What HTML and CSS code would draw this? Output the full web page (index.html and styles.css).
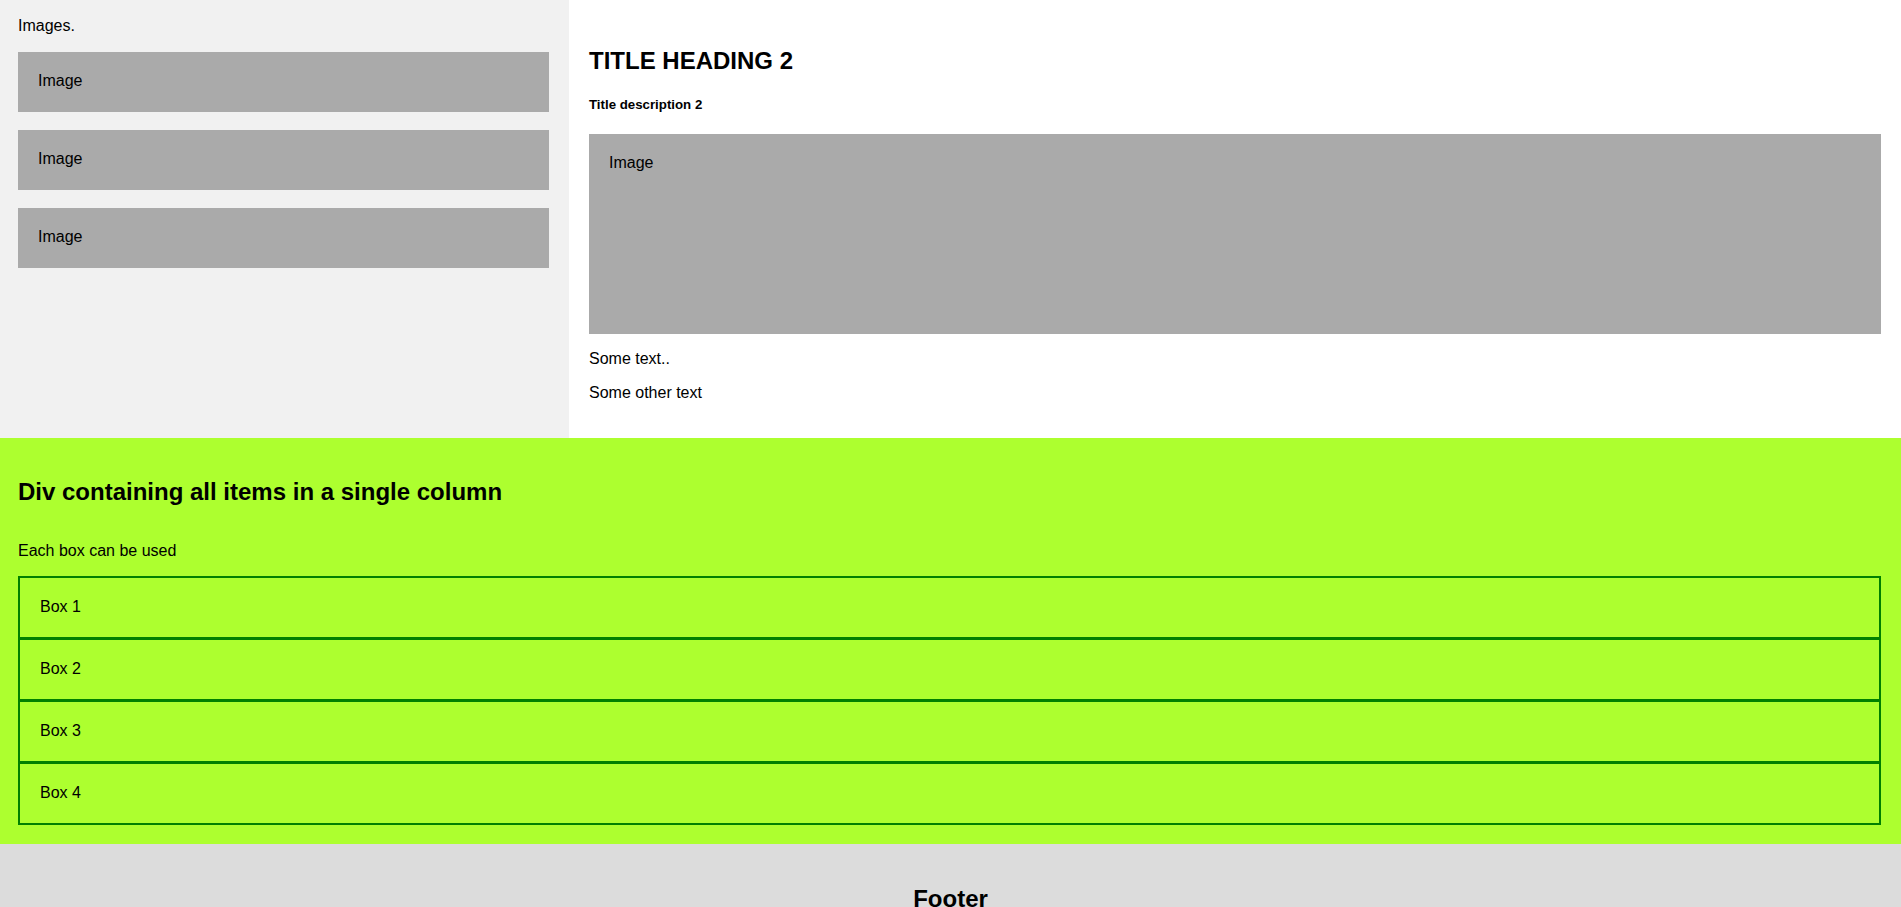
FILE: index.html
```html
<!DOCTYPE html>
<html lang="en">
<head>
    <meta charset="UTF-8">
    <meta name="viewport" content="width=device-width, initial-scale=1.0">
    <title>Layout demo</title>
    <link rel="stylesheet" href="styles.css">
</head>
<body>

    <div class="row">
        <div class="side">
            <p class="side-label">Images.</p>
            <div class="fake-img">Image</div>
            <div class="fake-img">Image</div>
            <div class="fake-img">Image</div>
        </div>
        <div class="main">
            <h2>TITLE HEADING 2</h2>
            <h5>Title description 2</h5>
            <div class="fake-img big">Image</div>
            <p>Some text..</p>
            <p>Some other text</p>
        </div>
    </div>

    <div class="column-area">
        <h2>Div containing all items in a single column</h2>
        <p class="intro">Each box can be used</p>
        <div class="box">Box 1</div>
        <div class="box">Box 2</div>
        <div class="box">Box 3</div>
        <div class="box">Box 4</div>
    </div>

    <div class="footer">
        <h2>Footer</h2>
    </div>

</body>
</html>
```

FILE: styles.css
```css
* {
    box-sizing: border-box;
}
body {
    font-family: "Liberation Sans", Arial, sans-serif;
    font-size: 16px;
    color: #000;
    margin: 0;
    padding: 0;
}
.row {
    display: flex;
}
.side {
    width: 569px;
    flex-shrink: 0;
    background-color: #f1f1f1;
    padding: 0 20px 0 18px;
}
.side-label {
    margin: 17px 0 17px;
}
.fake-img {
    background-color: #aaaaaa;
    box-sizing: content-box;
    height: 20px;
    padding: 20px;
    margin-bottom: 18px;
}
.fake-img.big {
    height: 160px;
    margin-bottom: 0;
}
.main {
    flex: 1;
    background-color: white;
    padding: 27px 20px 20px;
}
.main p {
    margin: 16px 0;
}
.column-area {
    background-color: #adff2f;
    padding: 20px 20px 19px 18px;
}
.column-area h2 {
    margin: 20px 0 0;
}
.intro {
    margin: 36px 0 16px;
}
.box {
    border: 2px solid green;
    padding: 20px 20px 21px;
}
.box + .box {
    margin-top: -1px;
}
.footer {
    background-color: #dcdcdc;
    text-align: center;
    padding: 21px 20px;
}
.footer h2 {
    margin: 20px 0;
}
```
